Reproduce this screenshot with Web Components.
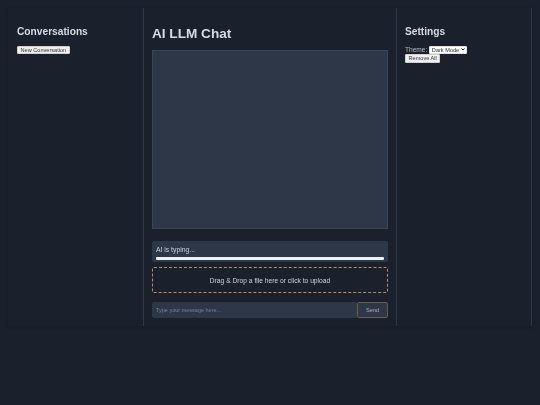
<!DOCTYPE html>
<html>
<head>
<meta charset="utf-8">
<style>
  html, body { margin: 0; height: 100%; background: #1a202c; }
  body { font-family: "Liberation Sans", Arial, sans-serif; color: #e2e8f0; }
  /* own layer, so the text is not drawn with coloured fringes */
  chat-app { will-change: transform; }
</style>
</head>
<body>
<chat-app>
  <conversation-list slot="left"></conversation-list>
  <chat-main slot="main"></chat-main>
  <settings-panel slot="right"></settings-panel>
</chat-app>
<script>
// helper, every component just sets its html in the shadow root
class Base extends HTMLElement {
  constructor (html) {
    super();
    this.attachShadow({ mode: 'open' }).innerHTML = html;
  }
}

const btn = `
  button {
    font: 5.6px "Liberation Sans", Arial, sans-serif;
    color: #333;
    background: #f0f0f0;
    border: 1px solid #d0d0d0;
    border-radius: 1px;
    padding: 0 2.5px;
    height: 8.5px;
    line-height: 6px;
    display: block;
  }
  h2 { font-size: 10.2px; line-height: 13px; font-weight: bold; color: #d5dbe4; margin: 0 0 7.5px; }
`;

class ChatApp extends Base {
  constructor () {
    super(`<style>
      :host { display: block; padding: 8px 8px 0; }
      .wrap { display: grid; grid-template-columns: 136px 253px 135px; height: 318px; box-shadow: 0 1px 3px rgba(0,0,0,.15); }
      .wrap > div { border-right: 1px solid #2d3748; min-width: 0; }
    </style>
    <div class="wrap">
      <div><slot name="left"></slot></div>
      <div><slot name="main"></slot></div>
      <div><slot name="right"></slot></div>
    </div>`);
  }
}

class ConversationList extends Base {
  constructor () {
    super(`<style>:host { display: block; padding: 17px 9px; } ${btn}</style>
      <h2>Conversations</h2>
      <button>New Conversation</button>`);
  }
}

class SettingsPanel extends Base {
  constructor () {
    super(`<style>
      :host { display: block; padding: 17px 8px; font-size: 6.6px; } ${btn}
      .row { display: flex; align-items: center; gap: 1.5px; height: 8.5px; }
      label { color: #b4bdca; }
      .select { position: relative; display: flex; width: 38px; }
      select { appearance: none; font: 5.6px "Liberation Sans", Arial, sans-serif; height: 8.5px; width: 100%; padding: 0 0 0 2px; border: 1px solid #e0e0e0; border-radius: 1px; background: #fff; color: #333; }
      svg { position: absolute; right: 2px; top: 2.5px; width: 4px; height: 3px; pointer-events: none; }
    </style>
      <h2>Settings</h2>
      <div class="row"><label>Theme:</label>
        <div class="select"><select><option>Dark Mode</option></select>
        <svg viewBox="0 0 8 6"><path d="M1 1l3 3 3-3" fill="none" stroke="#111" stroke-width="2"/></svg></div>
      </div>
      <button>Remove All</button>`);
  }
}

class ChatMain extends Base {
  constructor () {
    super(`<style>
      :host { display: block; padding: 17px 8px 0; }
      h1 { font-size: 13.6px; line-height: 17px; margin: 0 0 8px; color: #d5dbe4; }
      .log { height: 179px; box-sizing: border-box; background: #2d3748; border: 1px solid #394557; margin-bottom: 12px; }
    </style>
      <h1>AI LLM Chat</h1>
      <div class="log"></div>
      <typing-indicator></typing-indicator>
      <drop-zone></drop-zone>
      <message-input></message-input>`);
  }
}

class TypingIndicator extends Base {
  constructor () {
    super(`<style>
      :host { display: block; background: #2d3748; border-radius: 2px; padding: 5px 4px 2px; height: 21px; box-sizing: border-box; margin-bottom: 5px; font-size: 6.8px; line-height: 8px; color: #cbd5e0; }
      .bar { height: 3px; background: #edf2f7; border-radius: 1px; margin-top: 3px; }
    </style>
      <div>AI is typing...</div>
      <div class="bar"></div>`);
  }
}

class DropZone extends Base {
  constructor () {
    super(`<style>
      :host { display: flex; align-items: center; justify-content: center; height: 26px; box-sizing: border-box; border: 1px dashed #b98d66; border-radius: 2px; font-size: 6.7px; color: #cbd5e0; margin-bottom: 9px; }
    </style>Drag &amp; Drop a file here or click to upload`);
  }
}

class MessageInput extends Base {
  constructor () {
    super(`<style>
      :host { display: flex; height: 16px; }
      input { flex: 1; min-width: 0; box-sizing: border-box; background: #2d3748; border: 0; border-radius: 2px 0 0 2px; padding: 0 4px; font: 5.5px "Liberation Sans", Arial, sans-serif; color: #e2e8f0; }
      input::placeholder { color: #718096; }
      button { width: 31px; box-sizing: border-box; background: #2d3748; border: 1px solid #6b5a50; border-radius: 2px; color: #a9b4c4; font: 5.6px "Liberation Sans", Arial, sans-serif; padding: 0; }
    </style>
      <input placeholder="Type your message here...">
      <button>Send</button>`);
  }
}

customElements.define('chat-app', ChatApp);
customElements.define('conversation-list', ConversationList);
customElements.define('settings-panel', SettingsPanel);
customElements.define('chat-main', ChatMain);
customElements.define('typing-indicator', TypingIndicator);
customElements.define('drop-zone', DropZone);
customElements.define('message-input', MessageInput);
</script>
</body>
</html>
